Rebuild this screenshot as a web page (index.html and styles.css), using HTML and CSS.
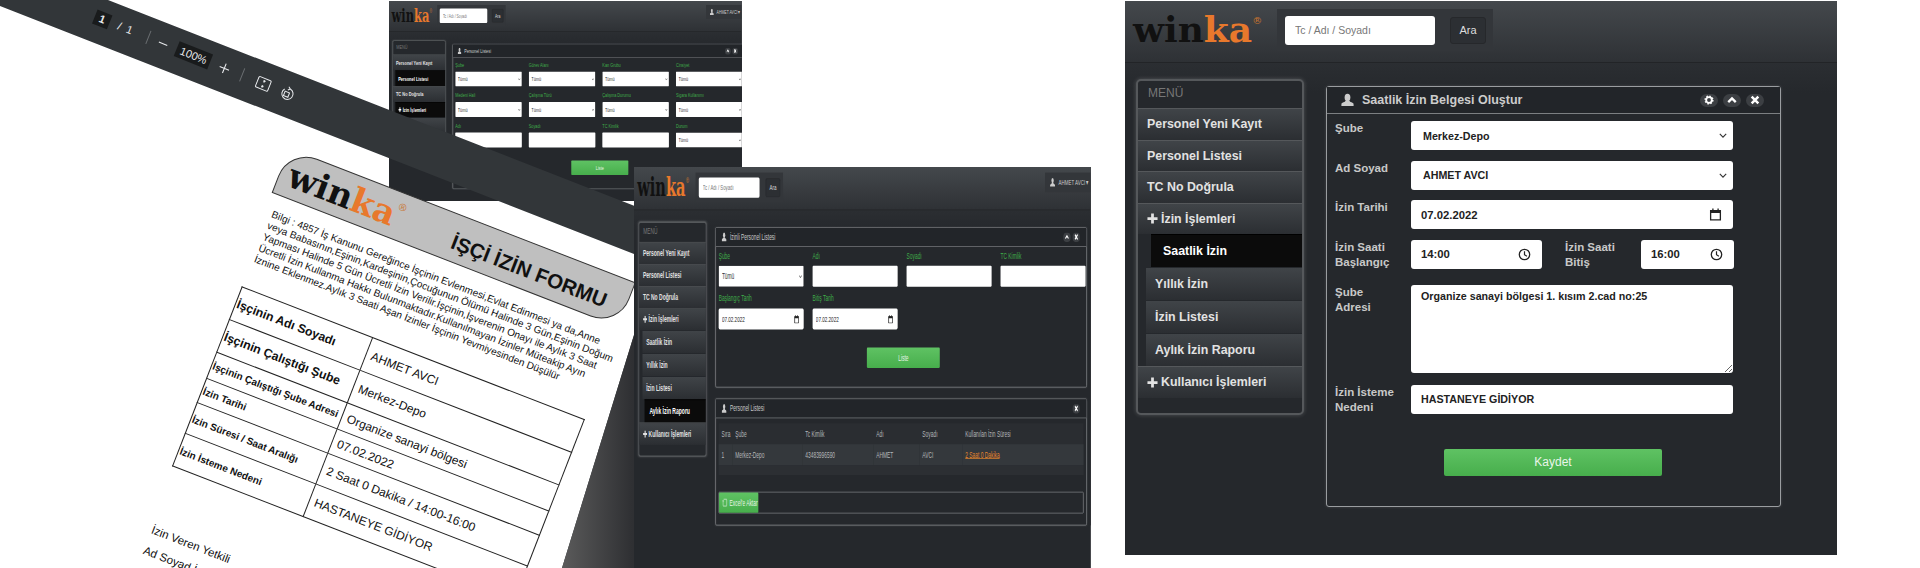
FILE: index.html
```html
<!DOCTYPE html>
<html lang="tr">
<head>
    <meta charset="UTF-8">
    <meta name="viewport" content="width=device-width, initial-scale=1.0">
    <title>Winka - Saatlik İzin</title>
    <link rel="stylesheet" href="styles.css">
</head>
<body>
    <svg class="icon-defs" aria-hidden="true">
        <symbol id="i-user" viewBox="0 0 14 14">
            <ellipse cx="7" cy="4.2" rx="3.1" ry="4"/>
            <path d="M4.8 7.8 C4.6 9.4 1 9.6 .5 11 L.4 13.4 H13.6 L13.5 11 C13 9.6 9.4 9.4 9.2 7.8 Z"/>
        </symbol>
        <symbol id="i-gear" viewBox="0 0 12 12">
            <circle cx="6" cy="6" r="3.4" fill="none" stroke="currentColor" stroke-width="2.2"/>
            <circle cx="6" cy="6" r="4.6" fill="none" stroke="currentColor" stroke-width="1.8" stroke-dasharray="1.8 1.8"/>
        </symbol>
        <symbol id="i-up" viewBox="0 0 12 12">
            <path d="M1.5 8.5 L6 4 L10.5 8.5" fill="none" stroke="currentColor" stroke-width="2.8"/>
        </symbol>
        <symbol id="i-close" viewBox="0 0 12 12">
            <path d="M2 2 L10 10 M10 2 L2 10" fill="none" stroke="currentColor" stroke-width="3"/>
        </symbol>
        <symbol id="i-plus" viewBox="0 0 12 12">
            <path d="M6 .5 V11.5 M.5 6 H11.5" fill="none" stroke="currentColor" stroke-width="3"/>
        </symbol>
        <symbol id="i-calendar" viewBox="0 0 12 12">
            <path d="M1.5 2.5 H10.5 V11 H1.5 Z" fill="none" stroke="currentColor" stroke-width="1.2"/>
            <path d="M1.5 2 H10.5 V4.6 H1.5 Z M3 .5 H4.2 V2 H3 Z M7.8 .5 H9 V2 H7.8 Z"/>
        </symbol>
        <symbol id="i-clock" viewBox="0 0 12 12">
            <circle cx="6" cy="6" r="4.8" fill="none" stroke="currentColor" stroke-width="1.2"/>
            <path d="M6 3 V6.2 L8.2 7.6" fill="none" stroke="currentColor" stroke-width="1.1"/>
        </symbol>
        <symbol id="i-excel" viewBox="0 0 12 12">
            <path d="M3 1.5 H9.5 A1 1 0 0 1 10.5 2.5 V9.5 A1 1 0 0 1 9.5 10.5 H2.5 A1 1 0 0 1 1.5 9.5 V3 M.2 4.4 L1.5 3 L2.8 4.4" fill="none" stroke="currentColor" stroke-width="1.1"/>
        </symbol>
    </svg>

    <div class="collage">

        <!-- personel listesi, arkadaki kucuk pencere -->
        <section class="app app-small">
            <header class="app-head">
                <div class="logo">win<span>ka</span><sup>®</sup></div>
                <form class="search-box">
                    <input class="search-input" type="text" placeholder="Tc / Adı / Soyadı">
                    <button class="search-btn" type="button">Ara</button>
                </form>
                <div class="user-box"><svg class="user-icon"><use href="#i-user"/></svg>AHMET AVCI ▾</div>
            </header>
            <div class="app-body">
                <nav class="side-menu">
                    <div class="menu-title">MENÜ</div>
                    <a class="menu-item">Personel Yeni Kayıt</a>
                    <a class="menu-item menu-active">Personel Listesi</a>
                    <a class="menu-item">TC No Doğrula</a>
                    <a class="menu-item menu-active"><svg class="plus-icon"><use href="#i-plus"/></svg>İzin İşlemleri</a>
                    <a class="menu-item menu-sub">Saatlik İzin</a>
                    <a class="menu-item menu-sub">Yıllık İzin</a>
                </nav>
                <div class="panel panel-wide">
                    <div class="panel-title">
                        <svg class="user-icon"><use href="#i-user"/></svg>Personel Listesi
                        <div class="panel-tools">
                            <span class="tool-btn"><svg><use href="#i-up"/></svg></span>
                            <span class="tool-btn"><svg><use href="#i-close"/></svg></span>
                        </div>
                    </div>
                    <div class="filter-grid">
                        <label class="filter-field">Şube<select><option>Tümü</option></select></label>
                        <label class="filter-field">Görev Alanı<select><option>Tümü</option></select></label>
                        <label class="filter-field">Kan Grubu<select><option>Tümü</option></select></label>
                        <label class="filter-field">Cinsiyet<select><option>Tümü</option></select></label>
                        <label class="filter-field">Medeni Hali<select><option>Tümü</option></select></label>
                        <label class="filter-field">Çalışma Türü<select><option>Tümü</option></select></label>
                        <label class="filter-field">Çalışma Durumu<select><option>Tümü</option></select></label>
                        <label class="filter-field">Sigara Kullanımı<select><option>Tümü</option></select></label>
                        <label class="filter-field">Adı<input type="text"></label>
                        <label class="filter-field">Soyadı<input type="text"></label>
                        <label class="filter-field">TC Kimlik<input type="text"></label>
                        <label class="filter-field">Durum<select><option>Tümü</option></select></label>
                    </div>
                    <button class="green-btn list-btn" type="button">Liste</button>
                </div>
            </div>
        </section>

        <!-- pdf goruntuleyici -->
        <div class="pdf-band"></div>
        <div class="pdf-edge"></div>
        <div class="pdf-toolbar">
            <span class="pdf-page">1</span>
            <span class="pdf-slash">/</span>
            <span class="pdf-total">1</span>
            <span class="pdf-sep"></span>
            <span class="pdf-minus"></span>
            <span class="pdf-zoom">100%</span>
            <svg class="pdf-plus" viewBox="0 0 12 12"><path d="M6 .5 V11.5 M.5 6 H11.5"/></svg>
            <span class="pdf-sep pdf-sep-two"></span>
            <svg class="pdf-fit" viewBox="0 0 16 16"><rect x="1" y="2" width="14" height="12" rx="1.2"/><path d="M8 4.4 V6.6 M6.8 5.4 L8 4.2 L9.2 5.4 M8 11.6 V9.4 M6.8 10.6 L8 11.8 L9.2 10.6"/></svg>
            <svg class="pdf-rotate" viewBox="0 0 16 16"><path d="M3.4 4.6 A6 6 0 1 0 9 2.4 M9 2.4 L6.8 .8 M9 2.4 L7 4.4"/><rect x="4.8" y="6.6" width="5" height="5"/></svg>
        </div>

        <!-- izin formu -->
        <article class="sheet">
            <div class="sheet-head">
                <div class="logo logo-sheet">win<span>ka</span><sup>®</sup></div>
                <h1 class="sheet-title">İŞÇİ İZİN FORMU</h1>
            </div>
            <p class="sheet-info">Bilgi : 4857 İş Kanunu Gereğince İşçinin Evlenmesi,Evlat Edinmesi ya da,Anne<br>
                veya Babasının,Eşinin,Kardeşinin,Çocuğunun Ölümü Halinde 3 Gün,Eşinin Doğum<br>
                Yapması Halinde 5 Gün Ücretli İzin Verilir.İşçinin,İşverenin Onayı ile Aylık 3 Saat<br>
                Ücretli İzin Kullanma Hakkı Bulunmaktadır.Kullanılmayan İzinler Müteakip Ayın<br>
                İznine Eklenmez.Aylık 3 Saati Aşan İzinler İşçinin Yevmiyesinden Düşülür</p>
            <table class="sheet-table">
                <tr class="row-a"><th class="th-big">İşçinin Adı Soyadı</th><td>AHMET AVCI</td></tr>
                <tr class="row-b"><th class="th-big">İşçinin Çalıştığı Şube</th><td>Merkez-Depo</td></tr>
                <tr class="row-c"><th>İşçinin Çalıştığı Şube Adresi</th><td>Organize sanayi bölgesi</td></tr>
                <tr class="row-e"><th>İzin Tarihi</th><td>07.02.2022</td></tr>
                <tr class="row-d"><th>İzin Süresi / Saat Aralığı</th><td>2 Saat 0 Dakika / 14:00-16:00</td></tr>
                <tr class="row-a"><th>İzin İsteme Nedeni</th><td>HASTANEYE GİDİYOR</td></tr>
            </table>
            <div class="sheet-sign">İzin Veren Yetkili<br>Ad Soyad İmza</div>
        </article>

        <!-- izinli personel listesi -->
        <section class="app app-mid">
            <header class="app-head">
                <div class="logo">win<span>ka</span><sup>®</sup></div>
                <form class="search-box">
                    <input class="search-input" type="text" placeholder="Tc / Adı / Soyadı">
                    <button class="search-btn" type="button">Ara</button>
                </form>
                <div class="user-box"><svg class="user-icon"><use href="#i-user"/></svg>AHMET AVCI ▾</div>
            </header>
            <div class="app-body">
                <nav class="side-menu">
                    <div class="menu-title">MENÜ</div>
                    <a class="menu-item">Personel Yeni Kayıt</a>
                    <a class="menu-item">Personel Listesi</a>
                    <a class="menu-item">TC No Doğrula</a>
                    <a class="menu-item"><svg class="plus-icon"><use href="#i-plus"/></svg>İzin İşlemleri</a>
                    <a class="menu-item menu-sub">Saatlik İzin</a>
                    <a class="menu-item menu-sub">Yıllık İzin</a>
                    <a class="menu-item menu-sub">İzin Listesi</a>
                    <a class="menu-item menu-sub menu-active">Aylık İzin Raporu</a>
                    <a class="menu-item"><svg class="plus-icon"><use href="#i-plus"/></svg>Kullanıcı İşlemleri</a>
                </nav>
                <div class="panel-stack">
                    <div class="panel panel-wide">
                        <div class="panel-title">
                            <svg class="user-icon"><use href="#i-user"/></svg>İzinli Personel Listesi
                            <div class="panel-tools">
                                <span class="tool-btn"><svg><use href="#i-up"/></svg></span>
                                <span class="tool-btn"><svg><use href="#i-close"/></svg></span>
                            </div>
                        </div>
                        <div class="filter-grid">
                            <label class="filter-field">Şube<select><option>Tümü</option></select></label>
                            <label class="filter-field">Adı<input type="text"></label>
                            <label class="filter-field">Soyadı<input type="text"></label>
                            <label class="filter-field">TC Kimlik<input type="text"></label>
                            <label class="filter-field">Başlangıç Tarih
                                <span class="icon-input"><input type="text" value="07.02.2022"><svg><use href="#i-calendar"/></svg></span>
                            </label>
                            <label class="filter-field">Bitiş Tarih
                                <span class="icon-input"><input type="text" value="07.02.2022"><svg><use href="#i-calendar"/></svg></span>
                            </label>
                        </div>
                        <button class="green-btn list-btn" type="button">Liste</button>
                    </div>
                    <div class="panel panel-wide panel-result">
                        <div class="panel-title">
                            <svg class="user-icon"><use href="#i-user"/></svg>Personel Listesi
                            <div class="panel-tools">
                                <span class="tool-btn"><svg><use href="#i-close"/></svg></span>
                            </div>
                        </div>
                        <table class="result-table">
                            <colgroup>
                                <col class="col-sira"><col class="col-sube"><col class="col-tc">
                                <col class="col-ad"><col class="col-soyad"><col>
                            </colgroup>
                            <tr><th>Sıra</th><th>Şube</th><th>Tc Kimlik</th><th>Adı</th><th>Soyadı</th><th>Kullanılan İzin Süresi</th></tr>
                            <tr class="result-row"><td>1</td><td>Merkez-Depo</td><td>43483996590</td><td>AHMET</td><td>AVCI</td><td class="result-time">2 Saat 0 Dakika</td></tr>
                            <tr class="result-empty"><td colspan="6"></td></tr>
                        </table>
                        <div class="excel-bar">
                            <button class="green-btn excel-btn" type="button"><svg><use href="#i-excel"/></svg>Excel'e Aktar</button>
                        </div>
                    </div>
                </div>
            </div>
        </section>

        <!-- saatlik izin belgesi -->
        <section class="app app-main">
            <header class="app-head">
                <div class="logo">win<span>ka</span><sup>®</sup></div>
                <form class="search-box">
                    <input class="search-input" type="text" placeholder="Tc / Adı / Soyadı">
                    <button class="search-btn" type="button">Ara</button>
                </form>
            </header>
            <div class="app-body">
                <nav class="side-menu">
                    <div class="menu-title">MENÜ</div>
                    <a class="menu-item">Personel Yeni Kayıt</a>
                    <a class="menu-item">Personel Listesi</a>
                    <a class="menu-item">TC No Doğrula</a>
                    <a class="menu-item"><svg class="plus-icon"><use href="#i-plus"/></svg>İzin İşlemleri</a>
                    <a class="menu-item menu-sub menu-active">Saatlik İzin</a>
                    <a class="menu-item menu-sub">Yıllık İzin</a>
                    <a class="menu-item menu-sub">İzin Listesi</a>
                    <a class="menu-item menu-sub">Aylık İzin Raporu</a>
                    <a class="menu-item"><svg class="plus-icon"><use href="#i-plus"/></svg>Kullanıcı İşlemleri</a>
                </nav>
                <div class="panel panel-form">
                    <div class="panel-title">
                        <svg class="user-icon"><use href="#i-user"/></svg>Saatlik İzin Belgesi Oluştur
                        <div class="panel-tools">
                            <span class="tool-btn"><svg><use href="#i-gear"/></svg></span>
                            <span class="tool-btn"><svg><use href="#i-up"/></svg></span>
                            <span class="tool-btn"><svg><use href="#i-close"/></svg></span>
                        </div>
                    </div>
                    <form class="leave-form">
                        <div class="form-row">
                            <label class="form-label">Şube</label>
                            <select class="form-field"><option>Merkez-Depo</option></select>
                        </div>
                        <div class="form-row">
                            <label class="form-label">Ad Soyad</label>
                            <select class="form-field"><option>AHMET AVCI</option></select>
                        </div>
                        <div class="form-row">
                            <label class="form-label">İzin Tarihi</label>
                            <span class="icon-input form-field"><input type="text" value="07.02.2022"><svg><use href="#i-calendar"/></svg></span>
                        </div>
                        <div class="form-row form-row-time">
                            <label class="form-label">İzin Saati Başlangıç</label>
                            <span class="icon-input time-start"><input type="text" value="14:00"><svg><use href="#i-clock"/></svg></span>
                            <label class="form-label label-end">İzin Saati Bitiş</label>
                            <span class="icon-input time-end"><input type="text" value="16:00"><svg><use href="#i-clock"/></svg></span>
                        </div>
                        <div class="form-row form-row-address">
                            <label class="form-label">Şube<br>Adresi</label>
                            <textarea class="form-field address-field">Organize sanayi bölgesi 1. kısım 2.cad no:25</textarea>
                        </div>
                        <div class="form-row">
                            <label class="form-label">İzin İsteme Nedeni</label>
                            <input class="form-field reason-field" type="text" value="HASTANEYE GİDİYOR">
                        </div>
                        <button class="green-btn save-btn" type="button">Kaydet</button>
                    </form>
                </div>
            </div>
        </section>
    </div>
</body>
</html>
```

FILE: styles.css
```css
body {
    margin: 0;
    background-color: #fff;
    font-family: "Liberation Sans", Arial, sans-serif;
}

.icon-defs {
    display: none;
}

svg {
    fill: currentColor;
}

select {
    appearance: none;
    background-image: url("data:image/svg+xml,%3Csvg xmlns='http://www.w3.org/2000/svg' viewBox='0 0 10 6'%3E%3Cpath d='M1 1 L5 5 L9 1' fill='none' stroke='%23333' stroke-width='1.4'/%3E%3C/svg%3E");
    background-repeat: no-repeat;
    background-position: right 4px center;
    background-size: 8px 5px;
}

.collage {
    position: relative;
    width: 1920px;
    height: 568px;
    overflow: hidden;
    background-color: #fff;
}

/* uygulama penceresi */
.app {
    position: absolute;
    overflow: hidden;
    background-color: #25282c;
    color: #ccc;
    transform-origin: 0 0;
    font-size: 12px;
}

.app-main {
    left: 1125px;
    top: 1px;
    width: 712px;
    height: 554px;
}

.app-mid {
    left: 634px;
    top: 167px;
    width: 1128px;
    height: 573px;
    transform: scale(.405, .7);
}

.app-small {
    left: 389px;
    top: 1px;
    width: 1113px;
    height: 400px;
    transform: scale(.317, .5);
}

.app-head {
    display: flex;
    box-sizing: border-box;
    height: 62px;
    padding-left: 8px;
    background: linear-gradient(#44484c, #2e3135);
    border-bottom: 1px solid #222427;
}

.logo {
    width: 144px;
    font-family: "DejaVu Serif", "Liberation Serif", serif;
    font-weight: bold;
    font-size: 36px;
    line-height: 56px;
    color: #111;
    white-space: nowrap;
}

.logo span {
    color: #e8782c;
}

.logo sup {
    font-size: 10px;
    font-weight: normal;
    line-height: 0;
    vertical-align: 18px;
    color: #c9742f;
}

.search-box {
    display: flex;
    align-items: center;
    height: 42px;
    margin-top: 8px;
    padding: 0 7px 0 8px;
    background-color: #33363a;
}

.search-input {
    box-sizing: border-box;
    width: 150px;
    height: 29px;
    padding: 0 10px;
    border: none;
    border-radius: 3px;
    font: 10.5px "Liberation Sans", Arial, sans-serif;
}

.search-input::placeholder {
    color: #777;
}

.search-btn {
    width: 36px;
    height: 27px;
    margin-left: 15px;
    padding: 0;
    border: 1px solid #26282b;
    border-radius: 3px;
    background-color: #2c2f33;
    color: #ddd;
    font: 11px "Liberation Sans", Arial, sans-serif;
}

.user-box {
    display: flex;
    align-items: center;
    align-self: flex-start;
    height: 28px;
    margin: 8px 1px 0 auto;
    padding: 0 4px 0 12px;
    background-color: #33363a;
    font-size: 11px;
    white-space: nowrap;
}

.user-icon {
    flex: none;
    width: 13px;
    height: 14px;
    margin-right: 8px;
}

.app-body {
    display: flex;
    align-items: flex-start;
    gap: 22px;
    padding: 16px 0 0 11px;
    background: linear-gradient(#2b2e32, #25282c 30px);
}

/* yan menu */
.side-menu {
    flex: none;
    box-sizing: border-box;
    width: 168px;
    padding-bottom: 15px;
    border: 2px solid #55585b;
    border-radius: 5px;
    background-color: #25282c;
    box-shadow: 0 0 4px rgba(255, 255, 255, .2);
}

.menu-title {
    height: 27px;
    padding-left: 10px;
    line-height: 24px;
    color: #777;
}

.menu-item {
    display: flex;
    align-items: center;
    box-sizing: border-box;
    height: 31.5px;
    padding-left: 9px;
    border-top: 1px solid #55585b;
    background: linear-gradient(#404448, #2b2e32);
    color: #e2e2e2;
    font-size: 12.4px;
    font-weight: bold;
    white-space: nowrap;
}

.menu-sub {
    height: 33px;
    margin-left: 8px;
    border-top-color: #25282c;
}

.menu-active {
    margin-left: 7px;
    border-top-color: #000;
    background: #0b0b0b;
    color: #fff;
}

.menu-sub.menu-active {
    margin-left: 13px;
    padding-left: 12px;
}

.plus-icon {
    flex: none;
    width: 11px;
    height: 11px;
    margin-right: 3px;
}

/* paneller */
.panel-stack {
    display: flex;
    flex-direction: column;
    gap: 16px;
    margin-top: 8px;
}

.panel {
    box-sizing: border-box;
    border: 1px solid #9a9da0;
    border-radius: 3px;
    background-color: #25282c;
    box-shadow: 0 0 3px rgba(255, 255, 255, .15);
}

.panel-wide {
    flex: none;
    width: 917px;
    padding-bottom: 27px;
}

.app-small .panel-wide {
    margin-top: 8px;
}

.panel-result {
    height: 181px;
    padding-bottom: 0;
}

.panel-form {
    width: 455px;
    height: 421px;
    margin-top: 7px;
}

.panel-title {
    display: flex;
    align-items: center;
    box-sizing: border-box;
    height: 27px;
    padding-left: 14px;
    border-bottom: 1px solid #7c7f82;
    background-color: #222529;
    font-size: 12.5px;
    font-weight: bold;
    color: #ccc;
}

.panel-wide .panel-title {
    font-weight: normal;
    font-size: 12px;
}

.panel-tools {
    display: flex;
    gap: 5px;
    margin-left: auto;
    margin-right: 16px;
}

.tool-btn {
    display: flex;
    justify-content: center;
    align-items: center;
    width: 18px;
    height: 13px;
    border-radius: 7px;
    background-color: #3c3f43;
    color: #fff;
}

.tool-btn svg {
    width: 10px;
    height: 10px;
}

/* liste filtreleri */
.filter-grid {
    display: grid;
    grid-template-columns: repeat(4, 210px);
    gap: 4px 22px;
    padding-left: 7px;
}

.filter-field {
    display: flex;
    flex-direction: column;
    line-height: 27px;
    color: #3fae49;
    white-space: nowrap;
}

.filter-field select,
.filter-field input {
    box-sizing: border-box;
    width: 100%;
    height: 30px;
    border: none;
    border-radius: 2px;
    background-color: #fff;
    color: #333;
    font: 12px "Liberation Sans", Arial, sans-serif;
}

.filter-field select {
    padding-left: 8px;
}

.green-btn {
    border: none;
    border-radius: 2px;
    background: linear-gradient(#5fc263, #47ae4c);
    color: #e9f5e9;
    font: 12px "Liberation Sans", Arial, sans-serif;
}

.list-btn {
    display: block;
    width: 180px;
    height: 29px;
    margin: 26px 0 0 373px;
}

.icon-input {
    display: flex;
    align-items: center;
    box-sizing: border-box;
    border-radius: 3px;
    background-color: #fff;
    color: #222;
}

.icon-input input {
    flex: 1;
    min-width: 0;
    height: 100%;
    padding: 0 0 0 10px;
    border: none;
    background: none;
    color: #222;
    font: bold 11.3px "Liberation Sans", Arial, sans-serif;
    outline: none;
}

.icon-input svg {
    flex: none;
    width: 13px;
    height: 13px;
    margin-right: 11px;
}

.filter-field .icon-input {
    height: 30px;
}

.filter-field .icon-input input {
    padding-left: 8px;
    font-weight: normal;
}

/* sonuc tablosu */
.result-table {
    width: 901px;
    margin: 7px 0 0 7px;
    border-collapse: collapse;
    table-layout: fixed;
    color: #b5b7b9;
    font-size: 12px;
    background-color: #2a2d31;
}

.result-table th,
.result-table td {
    height: 30px;
    padding: 0 0 0 7px;
    font-weight: normal;
    text-align: left;
    white-space: nowrap;
}

.col-sira { width: 34px; }
.col-sube { width: 173px; }
.col-tc { width: 175px; }
.col-ad { width: 114px; }
.col-soyad { width: 106px; }

.result-row {
    background-color: #34383c;
}

.result-table .result-time {
    color: #e8862c;
    text-decoration: underline;
}

.result-table .result-empty td {
    height: 14px;
    background-color: #2c2f33;
}

.excel-bar {
    display: flex;
    box-sizing: border-box;
    height: 31px;
    margin: 24px 0 0 7px;
    width: 901px;
    border: 1px solid #9a9da0;
    border-radius: 2px;
}

.excel-btn {
    display: flex;
    align-items: center;
    gap: 5px;
    width: 97px;
    padding: 0 0 0 8px;
    white-space: nowrap;
}

.excel-btn svg {
    width: 13px;
    height: 13px;
}

/* izin belgesi formu */
.leave-form {
    padding: 7px 0 0 8px;
}

.form-row {
    display: flex;
    align-items: flex-start;
    margin-bottom: 10.5px;
}

.form-row-time {
    margin-bottom: 15px;
}

.form-row-address {
    margin-bottom: 12px;
}

.form-label {
    flex: none;
    width: 76px;
    font-size: 11.5px;
    font-weight: bold;
    line-height: 15px;
    color: #c8c8c8;
}

.form-field {
    box-sizing: border-box;
    width: 322px;
    height: 29px;
    border: none;
    border-radius: 3px;
    background-color: #fff;
    color: #222;
    font: bold 10.7px "Liberation Sans", Arial, sans-serif;
}

select.form-field {
    padding-left: 12px;
    background-position: right 6px center;
}

.time-start,
.time-end {
    height: 29px;
}

.time-start {
    width: 131px;
}

.time-end {
    width: 93px;
}

.label-end {
    margin-left: 23px;
}

.address-field {
    display: block;
    height: 88px;
    padding: 5px 10px;
    resize: both;
}

.reason-field {
    padding: 0 10px;
}

.save-btn {
    display: block;
    width: 218px;
    height: 27px;
    margin: 34px 0 0 109px;
}

/* pdf goruntuleyici */
.pdf-band {
    position: absolute;
    left: 0;
    top: 0;
    width: 650px;
    height: 568px;
    background-color: #323639;
    clip-path: polygon(0 0, 108px 0, 650px 212px, 650px 568px, 562px 568px, 634px 335px, 634px 254px, 0 6px);
}

.pdf-edge {
    position: absolute;
    left: 560px;
    top: 0;
    width: 80px;
    height: 568px;
    background: linear-gradient(to right, #5c5c5c, #2f3033 90%);
    clip-path: polygon(74px 335px, 2px 568px, 80px 568px, 80px 335px);
}

.pdf-toolbar {
    position: absolute;
    left: 95px;
    top: 8px;
    display: flex;
    align-items: center;
    height: 16px;
    color: #e8eaed;
    font-size: 11px;
    transform: rotate(21.8deg);
    transform-origin: 0 50%;
}

.pdf-page {
    width: 16px;
    height: 15px;
    background-color: #191b1c;
    font-weight: bold;
    line-height: 15px;
    text-align: center;
}

.pdf-slash {
    margin-left: 9px;
}

.pdf-total {
    margin-left: 6px;
}

.pdf-sep {
    width: 1px;
    height: 14px;
    margin-left: 17px;
    background-color: #6b6f72;
}

.pdf-minus {
    width: 9px;
    height: 1px;
    margin-left: 11px;
    background-color: #e8eaed;
}

.pdf-zoom {
    width: 36px;
    height: 16px;
    margin-left: 10px;
    background-color: #191b1c;
    line-height: 16px;
    text-align: center;
}

.pdf-plus {
    width: 11px;
    height: 11px;
    margin-left: 10px;
    fill: none;
    stroke: #e8eaed;
    stroke-width: 1.2;
}

.pdf-sep-two {
    margin-left: 13px;
}

.pdf-fit,
.pdf-rotate {
    flex: none;
    width: 15px;
    height: 15px;
    fill: none;
    stroke: #e8eaed;
    stroke-width: 1.1;
}

.pdf-fit {
    margin-left: 15px;
}

.pdf-rotate {
    margin-left: 11px;
}

/* izin formu sayfasi */
.sheet {
    position: absolute;
    left: 289px;
    top: 148px;
    width: 372px;
    color: #111;
    transform: rotate(21.2deg);
    transform-origin: 0 0;
}

.sheet-head {
    display: flex;
    align-items: center;
    justify-content: space-between;
    box-sizing: border-box;
    height: 48px;
    padding: 0 20px 0 9px;
    border: 1px solid #333;
    border-radius: 30px 0 30px 0;
    background-color: #bfbfbf;
}

.logo-sheet {
    font-size: 34px;
    line-height: 46px;
}

.sheet-title {
    margin: 8px 0 0;
    font-size: 20.5px;
    font-weight: bold;
    white-space: nowrap;
}

.sheet-info {
    margin: 14px 0 24px 8px;
    font-size: 10.1px;
    line-height: 12px;
    white-space: nowrap;
}

.sheet-table {
    width: 368px;
    margin-left: 6px;
    border-collapse: collapse;
    table-layout: fixed;
}

.sheet-table th,
.sheet-table td {
    padding: 0 3px 0 5px;
    border: 1px solid #222;
    vertical-align: middle;
    text-align: left;
    white-space: nowrap;
    overflow: hidden;
}

.sheet-table th {
    width: 135px;
    padding-left: 1px;
    font-size: 10px;
}

.sheet-table td {
    font-size: 12px;
    font-weight: normal;
}

.sheet-table .th-big {
    font-size: 12.3px;
}

.row-a th,
.row-a td {
    height: 34px;
}

.row-b th,
.row-b td {
    height: 34px;
}

.row-c th,
.row-c td {
    height: 27px;
}

.row-e th,
.row-e td {
    height: 25px;
}

.row-d th,
.row-d td {
    height: 32px;
}

.sheet-sign {
    margin: 55px 0 0 10px;
    font-size: 11.5px;
    line-height: 22px;
}
```
